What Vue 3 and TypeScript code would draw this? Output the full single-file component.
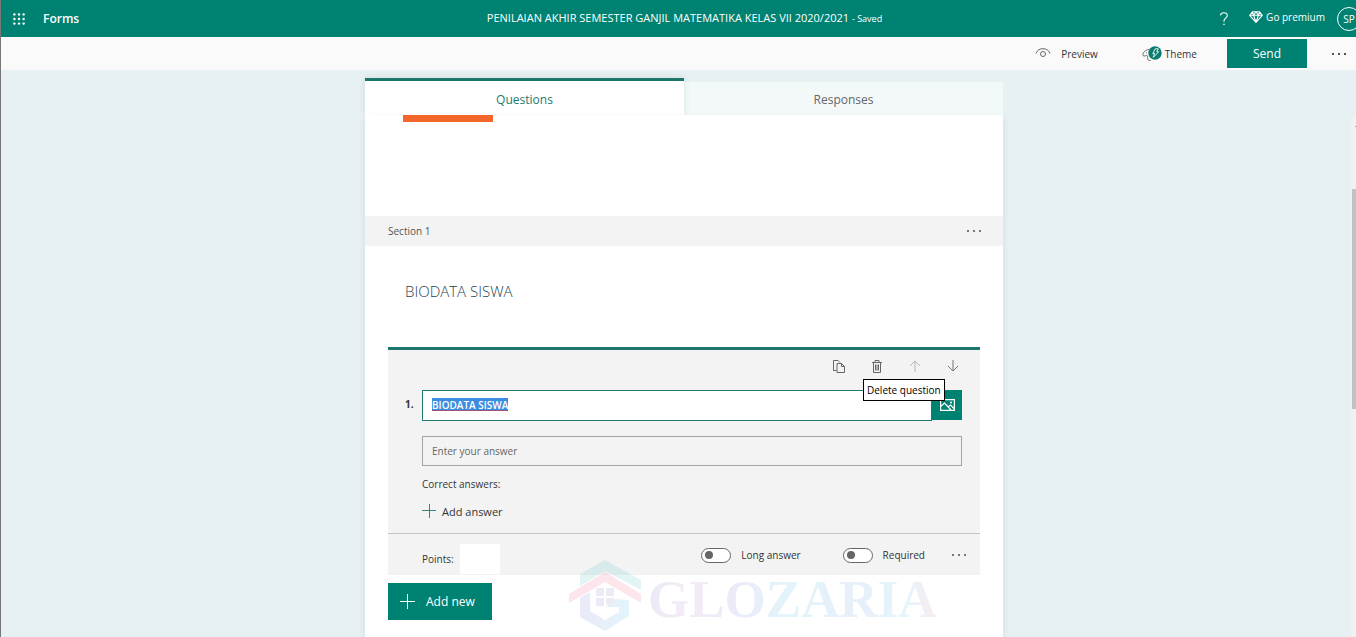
<script setup lang="ts">
import { onMounted, ref } from 'vue'

const questionText = ref('BIODATA SISWA')
const answerText = ref('')
const points = ref('')
const longAnswer = ref(false)
const required = ref(false)
const activeTab = ref('Questions')
const tabs: string[] = ['Questions', 'Responses']
const questionInput = ref<HTMLInputElement | null>(null)

onMounted(() => {
  questionInput.value?.focus()
  questionInput.value?.select()
})
</script>

<template>
  <div class="viewport">
    <div class="app">
      <header class="header">
        <div class="brand">
          <button class="plain waffle" aria-label="App launcher">
            <svg width="12" height="12" viewBox="0 0 12 12" fill="#fff">
              <template v-for="r in 3" :key="r">
                <circle v-for="c in 3" :key="c" :cx="c * 4.6 - 3.2" :cy="r * 4.6 - 3.2" r="1.2" />
              </template>
            </svg>
          </button>
          <span class="app-name">Forms</span>
        </div>
        <div class="doc-title">
          PENILAIAN AKHIR SEMESTER GANJIL MATEMATIKA KELAS VII 2020/2021
          <span class="saved">- Saved</span>
        </div>
        <div class="account">
          <button class="plain help" aria-label="Help">
            <svg width="10" height="14" viewBox="0 0 10 14" fill="none" stroke="#fff" stroke-width="1.1">
              <path d="M1.5 3.4C1.7 1.6 3 .7 4.9.7c2 0 3.4 1.1 3.4 2.9C8.3 6 5 6.3 5 8.8v1" />
              <circle cx="5" cy="12.3" r=".5" fill="#fff" stroke-width=".6" />
            </svg>
          </button>
          <button class="plain premium">
            <svg width="14" height="12" viewBox="0 0 14 12" fill="none" stroke="#fff" stroke-width="1.1" stroke-linejoin="round">
              <path d="M3.4.8h7.2L13.3 4.3 7 11.3.7 4.3zM.7 4.3h12.6M3.4.8l1.2 3.5L7 11.3l2.4-7L10.6.8M4.6 4.3 7 .8l2.4 3.5" />
            </svg>
            Go premium
          </button>
          <button class="plain avatar">SP</button>
        </div>
      </header>

      <nav class="toolbar" aria-label="Form actions">
        <button class="plain tool preview">
          <svg width="16" height="12" viewBox="0 0 16 12" fill="none" stroke="#666" stroke-width="1">
            <path d="M1 5.5C2.2 2.2 4.8.7 8 .7s5.8 1.5 7 4.800" />
            <circle cx="8" cy="6" r="2.5" />
          </svg>
          Preview
        </button>
        <button class="plain tool theme">
          <svg width="20" height="16" viewBox="0 0 20 16" fill="none">
            <path d="M7 3.500C3.500 4 .9 6.300.9 8.700c0 1.600 1.700 1.500 2.900 1 1.500-.5 2 .3 1.800 1.600-.3 2 .8 3.700 3 3.200M4 6.800h.8M6.200 6h.5" stroke="#666" />
            <circle cx="13" cy="7" r="6.7" fill="#0b7d6e" />
            <path d="M13.200 2.800h3l-1.400 3h1.900l-5.400 5.500 1.300-3.800h-1.800z" stroke="#fff" stroke-width=".9" stroke-linejoin="round" />
          </svg>
          Theme
        </button>
        <button class="send">Send</button>
        <button class="plain more" aria-label="More options">
          <svg width="14" height="2" viewBox="0 0 14 2" fill="#555"><path d="M0 0h2v2H0zM6 0h2v2H6zM12 0h2v2h-2z" /></svg>
        </button>
      </nav>

      <main class="workspace">
        <div class="form">
          <div class="tabs" role="tablist">
            <button
              v-for="tab in tabs"
              :key="tab"
              class="tab"
              role="tab"
              :class="{ active: tab === activeTab }"
              :aria-selected="tab === activeTab"
              @click="activeTab = tab"
            >
              {{ tab }}
            </button>
          </div>

          <div class="panel">
            <div class="intro"><div class="accent"></div></div>

            <div class="section-bar">
              <span>Section 1</span>
              <button class="plain" aria-label="Section options">
                <svg width="14" height="2" viewBox="0 0 14 2" fill="#777"><path d="M0 0h2v2H0zM6 0h2v2H6zM12 0h2v2h-2z" /></svg>
              </button>
            </div>

            <h2 class="section-title">BIODATA SISWA</h2>

            <section class="card">
              <div class="card-tools">
                <button class="plain icon" aria-label="Copy question">
                  <svg width="12" height="13" viewBox="0 0 12 13" fill="none" stroke="#666">
                    <path d="M3.500 10.500h-3V.5h4.500l2 2M4 3.500h4.500l3 3v6H4zM8.500 3.500v3h3" />
                  </svg>
                </button>
                <div class="tip-anchor">
                  <button class="plain icon" aria-label="Delete question">
                    <svg width="12" height="13" viewBox="0 0 12 13" fill="none" stroke="#666">
                      <path d="M1 2.500h10M4 2.500v-2h4v2M2.500 2.500v10h7v-10M4.500 4.500v6M6 4.500v6M7.500 4.500v6" />
                    </svg>
                  </button>
                  <div class="tooltip" role="tooltip">Delete question</div>
                </div>
                <button class="plain icon" aria-label="Move up">
                  <svg width="12" height="12" viewBox="0 0 12 12" fill="none" stroke="#b5b5b5"><path d="M6 12V1M1 6l5-5 5 5" /></svg>
                </button>
                <button class="plain icon" aria-label="Move down">
                  <svg width="12" height="12" viewBox="0 0 12 12" fill="none" stroke="#777"><path d="M6 0v11M1 6l5 5 5-5" /></svg>
                </button>
              </div>

              <div class="question-row">
                <label class="number" for="question">1.</label>
                <input id="question" ref="questionInput" v-model="questionText" class="question" type="text" />
                <button class="media" aria-label="Insert media">
                  <svg width="15" height="12" viewBox="0 0 15 12" fill="none" stroke="#fff" stroke-width="1.2">
                    <path d="M.6.6h13.800v10.800H.6zM.6 7.500 4.500 4l6.500 7M8 8l2.500-2 4 4" />
                    <circle cx="11" cy="3.500" r=".5" />
                  </svg>
                </button>
              </div>

              <div class="card-body">
                <input v-model="answerText" class="answer" type="text" placeholder="Enter your answer" aria-label="Enter your answer" />
                <p class="correct">Correct answers:</p>
                <button class="plain add-answer">
                  <svg width="14" height="16" viewBox="0 0 14 16" stroke="#3a8378"><path d="M7.500 0v14M0 6.500h14" /></svg>
                  Add answer
                </button>
              </div>

              <div class="card-footer">
                <label class="points">Points: <input v-model="points" type="text" /></label>
                <div class="options">
                  <label class="switch"><input v-model="longAnswer" type="checkbox" role="switch" />Long answer</label>
                  <label class="switch"><input v-model="required" type="checkbox" role="switch" />Required</label>
                  <button class="plain" aria-label="More question settings">
                    <svg width="14" height="2" viewBox="0 0 14 2" fill="#777"><path d="M0 0h2v2H0zM6 0h2v2H6zM12 0h2v2h-2z" /></svg>
                  </button>
                </div>
              </div>
            </section>

            <button class="add-new">
              <svg width="15" height="15" viewBox="0 0 15 15" stroke="#fff"><path d="M7.500 0v15M0 7.500h15" /></svg>
              Add new
            </button>

            <svg class="watermark" width="400" height="76" viewBox="0 0 400 76" aria-hidden="true">
              <defs>
                <linearGradient id="word" x1="0" x2="1">
                  <stop offset="0" stop-color="#8a7fd0" />
                  <stop offset=".12" stop-color="#c58fcb" />
                  <stop offset=".3" stop-color="#8c8fdc" />
                  <stop offset=".5" stop-color="#58c4e8" />
                  <stop offset=".7" stop-color="#7aa4e0" />
                  <stop offset=".9" stop-color="#66c6ee" />
                  <stop offset="1" stop-color="#e58cab" />
                </linearGradient>
                <linearGradient id="hex" x1="0" x2="1">
                  <stop offset="0" stop-color="#8a84dc" />
                  <stop offset="1" stop-color="#5cc4ee" />
                </linearGradient>
              </defs>
              <path d="M12 14 37 0l36 20v10L37 11 12 26z" fill="#58c3c0" />
              <path d="M1 34 37 12l36 22v9L37 22 1 43z" fill="#ee6c8d" />
              <path d="M12 38l10-6v19l15 9 14-8v-5H39v-3l8-5 14 1v16L37 71 12 57z" fill="url(#hex)" />
              <path d="M28 28h8v8h-8zM38 28h8v8h-8zM28 38h8v8h-8zM38 38h8v6h-8z" fill="#8d86c8" />
              <text x="80" y="57" fill="url(#word)">GLOZARIA</text>
            </svg>
          </div>
        </div>
      </main>

      <div class="scrollbar">
        <svg width="8" height="4" viewBox="0 0 8 4" fill="#555"><path d="M0 4 4 0l4 4z" /></svg>
        <div class="thumb"></div>
      </div>
    </div>
  </div>
</template>

<style>
html,
body {
  background: #e7f1f3;
  overflow: hidden;
}
</style>

<style scoped>
.viewport {
  height: 100vh;
  overflow: hidden;
  box-sizing: border-box;
  border-left: 1px solid #777;
  font-family: 'Open Sans', 'Noto Sans', sans-serif;
  font-size: 10px;
  line-height: 16px;
  color: #333;
}
.viewport *,
.viewport *::before {
  box-sizing: border-box;
}
/* The document is slightly wider than the window, so its right edge is cut. */
.app {
  position: relative;
  width: calc(100% + 12px);
  height: 100%;
  display: flex;
  flex-direction: column;
}
button,
input {
  font: inherit;
  color: inherit;
  margin: 0;
}
button {
  cursor: pointer;
}
svg {
  display: block;
  flex: none;
}
.plain {
  display: flex;
  align-items: center;
  padding: 0;
  border: 0;
  background: none;
}
.header {
  display: grid;
  grid-template-columns: 1fr auto 1fr;
  align-items: center;
  height: 37px;
  flex: none;
  background: #008272;
  color: #fff;
}
.brand {
  display: flex;
  align-items: center;
  gap: 18px;
  padding-left: 12px;
}
.app-name {
  font-size: 12px;
  line-height: 16px;
  font-weight: 600;
}
.doc-title {
  font-size: 11px;
}
.saved {
  font-size: 9px;
}
.account {
  display: flex;
  align-items: center;
  justify-content: flex-end;
  padding-right: 7px;
}
.help {
  margin-right: 20px;
}
.premium {
  gap: 3px;
  margin-right: 12px;
  padding-bottom: 4px;
}
.avatar {
  width: 24px;
  height: 24px;
  justify-content: center;
  border: 1px solid #fff;
  border-radius: 50%;
  font-size: 10px;
}
.toolbar {
  display: flex;
  align-items: center;
  justify-content: flex-end;
  height: 33px;
  flex: none;
  padding-right: 22px;
  background: #fafafa;
}
.tool.preview {
  gap: 10px;
  margin-right: 44px;
}
.tool.theme {
  gap: 3px;
  margin-right: 30px;
}
.send {
  width: 80px;
  height: 29px;
  margin-right: 25px;
  padding: 0;
  border: 0;
  background: #008272;
  color: #fff;
  font-size: 12px;
}
.workspace {
  flex: 1;
  min-height: 0;
  display: flex;
  justify-content: center;
  padding: 8px 1px 0 0;
  background: #e7f1f3;
}
.form {
  display: flex;
  flex-direction: column;
  width: 638px;
}
.tabs {
  display: flex;
  align-items: flex-end;
}
.tab {
  flex: 1;
  height: 33px;
  padding: 2px 0 0;
  border: 0;
  background: #f3f9f9;
  color: #666;
  font-size: 12px;
}
.tab.active {
  height: 37px;
  padding-top: 4px;
  border-top: 3px solid #1b776b;
  background: #fff;
  color: #217a6f;
  box-shadow: 0 0 6px rgba(0, 60, 60, 0.12);
  clip-path: inset(-6px -6px 0 -6px);
}
.panel {
  position: relative;
  flex: 1;
  background: #fff;
  box-shadow: 0 3px 6px rgba(0, 60, 60, 0.12);
}
.intro {
  height: 101px;
  padding-left: 38px;
}
.accent {
  width: 90px;
  height: 7px;
  background: #f3672b;
}
.section-bar {
  display: flex;
  align-items: center;
  justify-content: space-between;
  height: 30px;
  padding: 0 22px 0 23px;
  background: #f3f3f3;
  color: #555;
}
.section-title {
  margin: 0;
  padding: 33px 40px 44px;
  font-size: 15px;
  line-height: 24px;
  font-weight: 300;
  color: #1d4352;
}
.card {
  margin: 0 23px;
  border-top: 3px solid #1b776b;
  background: #f3f3f3;
}
.card-tools {
  display: flex;
  align-items: center;
  justify-content: flex-end;
  gap: 26px;
  height: 40px;
  padding: 0 21px 8px 0;
}
.icon {
  width: 12px;
  height: 16px;
}
.tip-anchor {
  position: relative;
}
.tooltip {
  position: absolute;
  top: 21px;
  left: -8px;
  z-index: 2;
  padding: 2px 3px;
  border: 1px solid #000;
  background: #fff;
  color: #000;
  line-height: 16px;
  white-space: nowrap;
}
.question-row {
  display: flex;
  padding: 0 18px 0 17px;
}
.number {
  width: 17px;
  line-height: 29px;
  font-weight: 700;
}
.question {
  flex: 1;
  min-width: 0;
  height: 31px;
  padding: 0 9px 2px;
  border: 1px solid #217a6f;
  border-radius: 0;
  outline: 0;
  background: #fff;
  font-weight: 600;
  text-decoration: underline #a0527a;
  text-underline-offset: 2px;
}
.question::selection {
  background: #3c8de0;
  color: #fff;
  text-decoration: underline #a0527a;
}
.media {
  display: grid;
  place-items: center;
  width: 30px;
  height: 30px;
  padding: 0;
  border: 0;
  background: #008272;
}
.card-body {
  padding: 15px 18px 13px 34px;
}
.answer {
  display: block;
  width: 100%;
  height: 30px;
  padding: 0 9px;
  border: 1px solid #a3a3a3;
  border-radius: 0;
  background: transparent;
}
.answer::placeholder {
  color: #666;
  opacity: 1;
}
.correct {
  margin: 10px 0 12px;
}
.add-answer {
  gap: 6px;
  font-size: 11px;
}
.card-footer {
  display: flex;
  align-items: flex-start;
  justify-content: space-between;
  height: 42px;
  padding: 10px 14px 0 34px;
  border-top: 1px solid #c4c4c4;
}
.points {
  display: flex;
  align-items: center;
  gap: 6px;
}
.points input {
  width: 40px;
  height: 30px;
  border: 0;
  background: #fff;
}
.options {
  display: flex;
  align-items: center;
  padding-top: 3px;
}
.switch {
  display: flex;
  align-items: center;
  gap: 10px;
}
.switch + .switch {
  margin: 0 27px 0 42px;
}
.switch input {
  appearance: none;
  display: flex;
  align-items: center;
  width: 30px;
  height: 15px;
  padding: 0 3px;
  border: 1px solid #666;
  border-radius: 8px;
  background: #fff;
}
.switch input::before {
  content: '';
  width: 8px;
  height: 8px;
  border-radius: 50%;
  background: #666;
}
.switch input:checked::before {
  margin-left: auto;
}
.add-new {
  display: flex;
  align-items: center;
  gap: 11px;
  height: 37px;
  margin: 8px 23px 0;
  padding: 0 17px 0 12px;
  border: 0;
  background: #008272;
  color: #fff;
  font-size: 12px;
}
.watermark {
  position: absolute;
  left: 203px;
  top: 445px;
  opacity: 0.17;
  pointer-events: none;
}
.watermark text {
  font: 700 53px 'Liberation Serif', serif;
}
.scrollbar {
  position: absolute;
  top: 115px;
  right: 0;
  bottom: 0;
  width: 17px;
  padding: 8px 1px 0;
  background: #f0f1f1;
}
.scrollbar svg {
  margin-left: 3px;
}
.thumb {
  height: 220px;
  margin-top: 62px;
  background: #c1c1c1;
}
</style>
